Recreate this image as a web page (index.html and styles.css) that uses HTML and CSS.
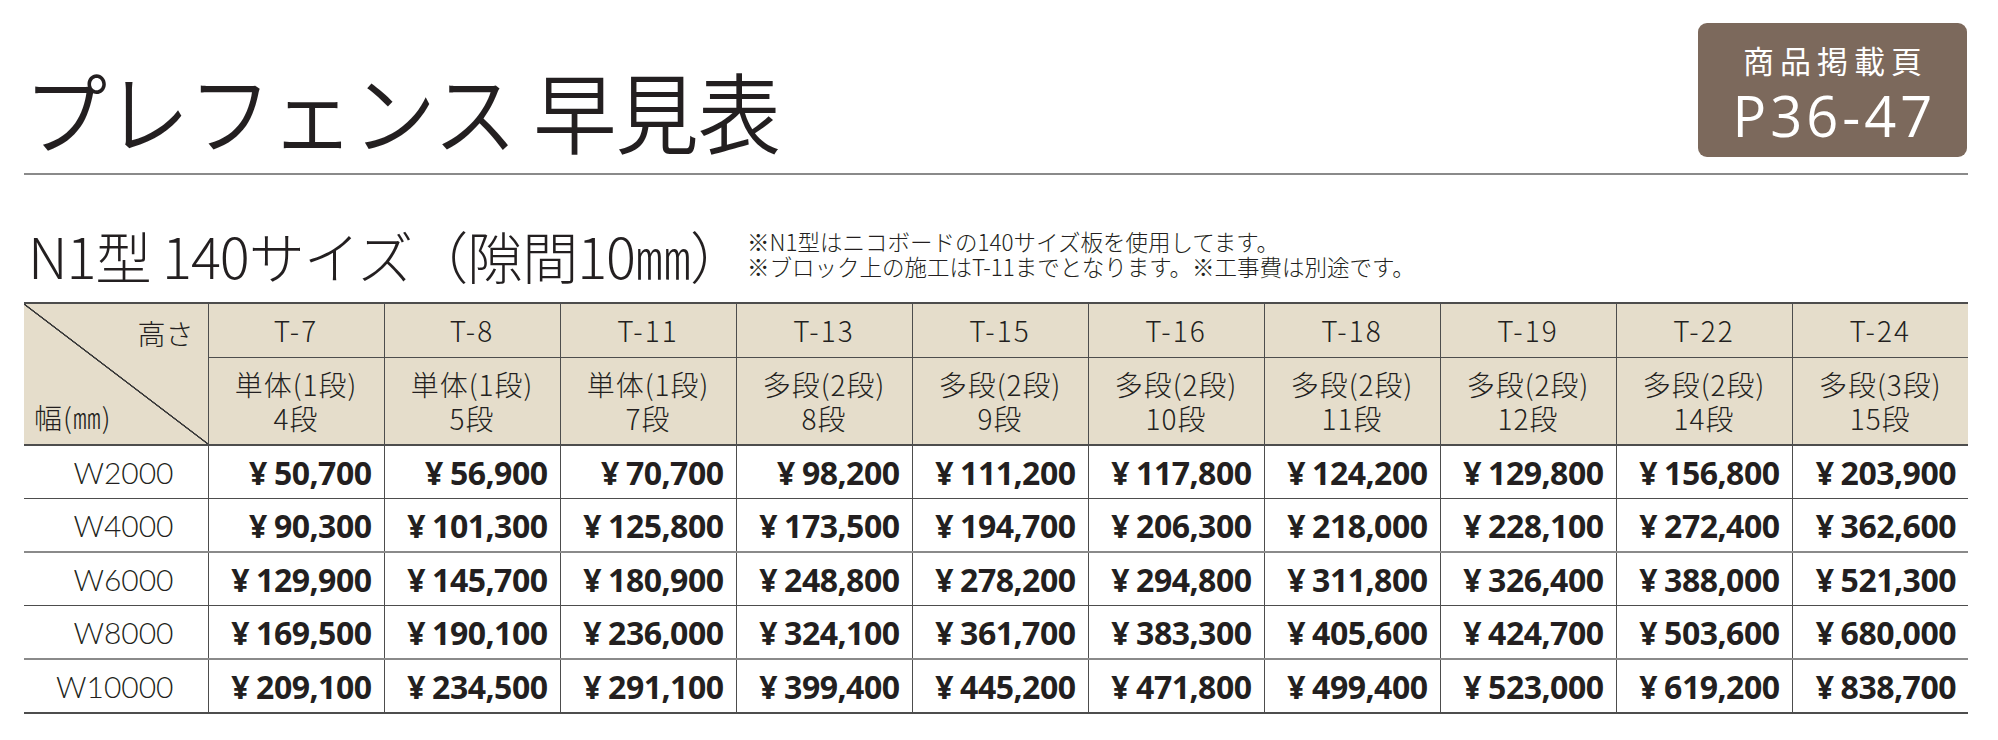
FILE: index.html
```html
<!DOCTYPE html>
<html lang="ja">
<head>
<meta charset="utf-8">
<title>プレフェンス 早見表</title>
<link rel="stylesheet" href="styles.css">
</head>
<body>
<div class="page">
  <header class="top">
    <h1 class="title">プレフェンス 早見表</h1>
    <div class="badge">
      <div class="badge-label">商品掲載頁</div>
      <div class="badge-page">P36-47</div>
    </div>
  </header>

  <div class="subhead">
    <h2 class="sub">N1型 140サイズ（隙間10㎜）</h2>
    <div class="notes">
      <p>※N1型はニコボードの140サイズ板を使用してます。</p>
      <p>※ブロック上の施工はT-11までとなります。※工事費は別途です。</p>
    </div>
  </div>

  <table class="price">
    <colgroup>
      <col class="c-head">
      <col span="10" class="c-val">
    </colgroup>
    <thead>
      <tr class="h1row">
        <th rowspan="2" class="corner">
          <div class="corner-in">
            <span class="c-top">高さ</span>
            <span class="c-bot">幅(㎜)</span>
          </div>
        </th>
        <th>T-7</th><th>T-8</th><th>T-11</th><th>T-13</th><th>T-15</th>
        <th>T-16</th><th>T-18</th><th>T-19</th><th>T-22</th><th>T-24</th>
      </tr>
      <tr class="h2row">
        <th><span class="ln">単体(1段)</span><span class="ln">4段</span></th>
        <th><span class="ln">単体(1段)</span><span class="ln">5段</span></th>
        <th><span class="ln">単体(1段)</span><span class="ln">7段</span></th>
        <th><span class="ln">多段(2段)</span><span class="ln">8段</span></th>
        <th><span class="ln">多段(2段)</span><span class="ln">9段</span></th>
        <th><span class="ln">多段(2段)</span><span class="ln">10段</span></th>
        <th><span class="ln">多段(2段)</span><span class="ln">11段</span></th>
        <th><span class="ln">多段(2段)</span><span class="ln">12段</span></th>
        <th><span class="ln">多段(2段)</span><span class="ln">14段</span></th>
        <th><span class="ln">多段(3段)</span><span class="ln">15段</span></th>
      </tr>
    </thead>
    <tbody>
      <tr>
        <th class="w">W2000</th>
        <td><span class="y">¥</span>50,700</td>
        <td><span class="y">¥</span>56,900</td>
        <td><span class="y">¥</span>70,700</td>
        <td><span class="y">¥</span>98,200</td>
        <td><span class="y">¥</span>111,200</td>
        <td><span class="y">¥</span>117,800</td>
        <td><span class="y">¥</span>124,200</td>
        <td><span class="y">¥</span>129,800</td>
        <td><span class="y">¥</span>156,800</td>
        <td><span class="y">¥</span>203,900</td>
      </tr>
      <tr class="grp">
        <th class="w">W4000</th>
        <td><span class="y">¥</span>90,300</td>
        <td><span class="y">¥</span>101,300</td>
        <td><span class="y">¥</span>125,800</td>
        <td><span class="y">¥</span>173,500</td>
        <td><span class="y">¥</span>194,700</td>
        <td><span class="y">¥</span>206,300</td>
        <td><span class="y">¥</span>218,000</td>
        <td><span class="y">¥</span>228,100</td>
        <td><span class="y">¥</span>272,400</td>
        <td><span class="y">¥</span>362,600</td>
      </tr>
      <tr>
        <th class="w">W6000</th>
        <td><span class="y">¥</span>129,900</td>
        <td><span class="y">¥</span>145,700</td>
        <td><span class="y">¥</span>180,900</td>
        <td><span class="y">¥</span>248,800</td>
        <td><span class="y">¥</span>278,200</td>
        <td><span class="y">¥</span>294,800</td>
        <td><span class="y">¥</span>311,800</td>
        <td><span class="y">¥</span>326,400</td>
        <td><span class="y">¥</span>388,000</td>
        <td><span class="y">¥</span>521,300</td>
      </tr>
      <tr class="grp">
        <th class="w">W8000</th>
        <td><span class="y">¥</span>169,500</td>
        <td><span class="y">¥</span>190,100</td>
        <td><span class="y">¥</span>236,000</td>
        <td><span class="y">¥</span>324,100</td>
        <td><span class="y">¥</span>361,700</td>
        <td><span class="y">¥</span>383,300</td>
        <td><span class="y">¥</span>405,600</td>
        <td><span class="y">¥</span>424,700</td>
        <td><span class="y">¥</span>503,600</td>
        <td><span class="y">¥</span>680,000</td>
      </tr>
      <tr class="last">
        <th class="w">W10000</th>
        <td><span class="y">¥</span>209,100</td>
        <td><span class="y">¥</span>234,500</td>
        <td><span class="y">¥</span>291,100</td>
        <td><span class="y">¥</span>399,400</td>
        <td><span class="y">¥</span>445,200</td>
        <td><span class="y">¥</span>471,800</td>
        <td><span class="y">¥</span>499,400</td>
        <td><span class="y">¥</span>523,000</td>
        <td><span class="y">¥</span>619,200</td>
        <td><span class="y">¥</span>838,700</td>
      </tr>
    </tbody>
  </table>
</div>
</body>
</html>
```

FILE: styles.css
```css
html, body {
  margin: 0;
  padding: 0;
  background: #ffffff;
}

body {
  font-family: "Noto Sans CJK JP", "Noto Sans", sans-serif;
  color: #231f20;
}

.page {
  width: 1944px;
  padding: 0 30px 0 24px;
}

/* ---------- top header ---------- */
.top {
  display: flex;
  justify-content: space-between;
  align-items: flex-end;
  height: 150px;
  padding-top: 23px;
  border-bottom: 2px solid #8a8a8a;
}

.title {
  margin: 0 0 20px 0;
  font-size: 88px;
  line-height: 88px;
  font-weight: 350;
  letter-spacing: -1px;
  color: #231f20;
  white-space: nowrap;
  transform: scaleX(0.945);
  transform-origin: left bottom;
}

.badge {
  width: 269px;
  height: 134px;
  margin: 0 1px 16px 0;
  box-sizing: border-box;
  padding-top: 21px;
  background: #7c695c;
  border-radius: 9px;
  color: #ffffff;
  display: flex;
  flex-direction: column;
  align-items: center;
}

.badge-label {
  font-family: "Noto Sans CJK JP", sans-serif;
  font-size: 31px;
  line-height: 32px;
  letter-spacing: 6px;
  padding-left: 6px;
  font-weight: 400;
}

.badge-page {
  margin-top: 11px;
  font-family: "Open Sans", "Noto Sans", sans-serif;
  font-size: 56px;
  line-height: 56px;
  letter-spacing: 4px;
  padding-left: 4px;
  font-weight: 400;
}

/* ---------- sub header ---------- */
.subhead {
  display: flex;
  align-items: flex-end;
  padding: 50px 0 17px 4px;
}

.sub {
  margin: 0;
  font-size: 56px;
  line-height: 60px;
  font-weight: 300;
  letter-spacing: -1px;
  white-space: nowrap;
  color: #231f20;
}

.notes {
  margin-left: 2px;
  padding-bottom: 6px;
  font-size: 22.5px;
  line-height: 25px;
  font-weight: 300;
  color: #231f20;
}

.notes p {
  margin: 0;
  white-space: nowrap;
}

/* ---------- table ---------- */
.price {
  width: 1944px;
  table-layout: fixed;
  border-collapse: collapse;
}

.c-head { width: 184px; }
.c-val { width: 176px; }

.price thead th {
  background: #e5ddcb;
  font-weight: 300;
  color: #231f20;
  text-align: center;
  padding: 0;
  border-left: 1px solid #4d4d4d;
  border-right: 1px solid #4d4d4d;
}

.price thead th:last-child {
  border-right: none;
}

.h1row th {
  height: 52px;
  font-size: 28px;
  line-height: 30px;
  letter-spacing: 2px;
  border-top: 2px solid #4d4d4d;
  border-bottom: 1px solid #4d4d4d;
}

.h2row th {
  height: 85px;
  font-size: 28px;
  letter-spacing: 1px;
  border-bottom: 2px solid #4d4d4d;
  padding-top: 2px;
}

.ln {
  display: block;
  line-height: 34px;
}

.price thead th.corner {
  border-left: none;
  border-bottom: 2px solid #4d4d4d;
  padding: 0;
  letter-spacing: 0;
  background:
    linear-gradient(to top right,
      transparent calc(50% - 1px),
      #3a3a3a calc(50% - 0.5px),
      #3a3a3a calc(50% + 0.5px),
      transparent calc(50% + 1px)),
    #e5ddcb;
}

.corner-in {
  height: 140px;
  box-sizing: border-box;
  display: flex;
  flex-direction: column;
  justify-content: space-between;
  padding: 12px 14px 10px 10px;
  font-size: 28px;
  line-height: 34px;
}

.c-top { align-self: flex-end; }
.c-bot { align-self: flex-start; letter-spacing: 1px; }

.price tbody th.w {
  font-family: "Lato", "Noto Sans", sans-serif;
  font-weight: 300;
  font-size: 30px;
  text-align: right;
  padding: 0 34px 0 0;
  color: #231f20;
  border-right: 1px solid #4d4d4d;
}

.price tbody td {
  height: 52px;
  padding: 0 12px 0 0;
  text-align: right;
  font-family: "Open Sans", "Noto Sans", sans-serif;
  font-weight: 700;
  font-size: 32px;
  letter-spacing: -0.5px;
  color: #231f20;
  border-left: 1px solid #4d4d4d;
  white-space: nowrap;
}

.price tbody td:last-child {
  border-right: none;
}

.price tbody tr {
  border-bottom: 1px solid #4d4d4d;
}

.price tbody tr.grp {
  border-bottom: 2px solid #8a8a8a;
}

.price tbody tr.last {
  border-bottom: 2px solid #4d4d4d;
}

.y {
  margin-right: 7px;
}
```
